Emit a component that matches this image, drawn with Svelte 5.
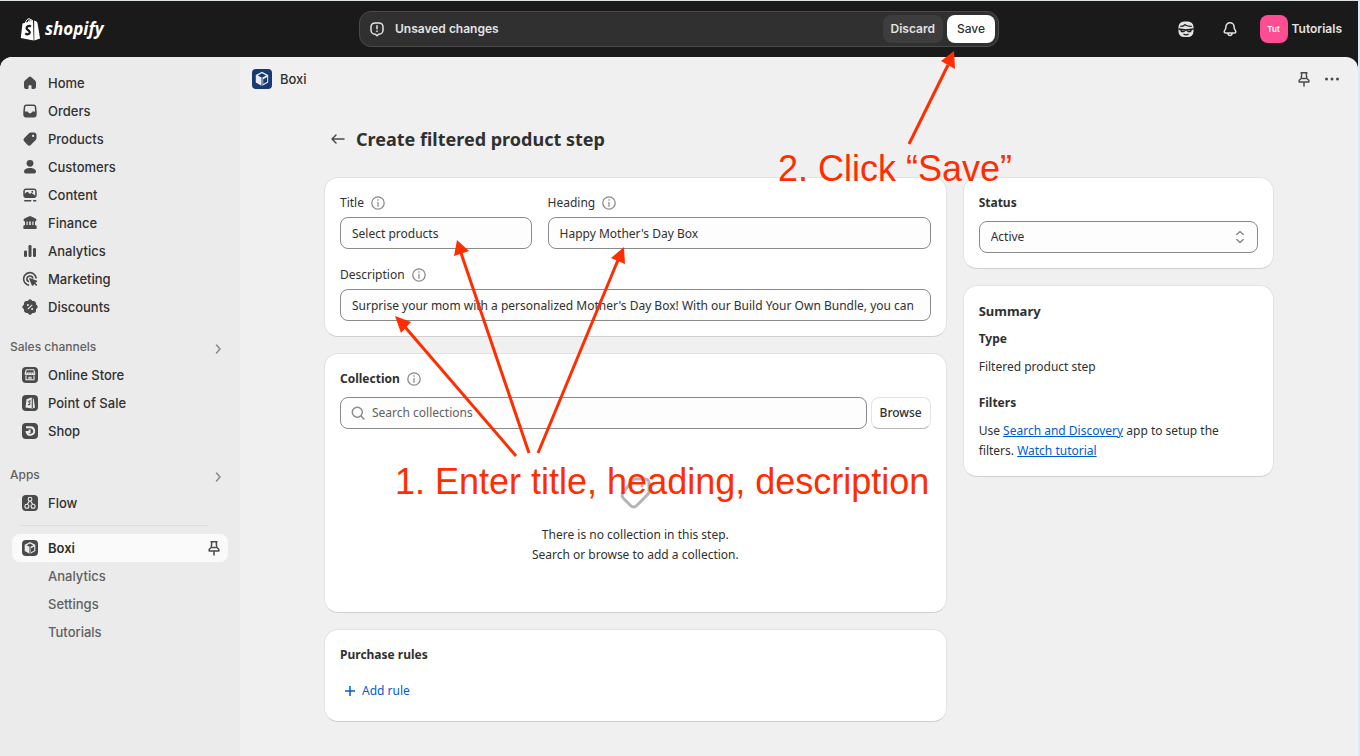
<script lang="ts">
	interface NavItem {
		label: string;
		icon: string;
	}

	const mainNav: NavItem[] = [
		{ label: 'Home', icon: 'home' },
		{ label: 'Orders', icon: 'orders' },
		{ label: 'Products', icon: 'products' },
		{ label: 'Customers', icon: 'customers' },
		{ label: 'Content', icon: 'content' },
		{ label: 'Finance', icon: 'finance' },
		{ label: 'Analytics', icon: 'analytics' },
		{ label: 'Marketing', icon: 'marketing' },
		{ label: 'Discounts', icon: 'discounts' }
	];

	const channels: NavItem[] = [
		{ label: 'Online Store', icon: 'store' },
		{ label: 'Point of Sale', icon: 'pos' },
		{ label: 'Shop', icon: 'shop' }
	];

	const appPages = ['Analytics', 'Settings', 'Tutorials'];

	const arrows = [
		{ from: [909, 144], to: [948, 65], head: '954,51 941,61 955,69' },
		{ from: [516, 456], to: [405, 327], head: '395,316 411,322 401,333' },
		{ from: [529, 453], to: [461, 253], head: '457,240 454,256 469,251' },
		{ from: [538, 453], to: [618, 260], head: '624,247 611,258 625,264' }
	];

	let title = $state('Select products');
	let heading = $state("Happy Mother's Day Box");
	let description = $state(
		"Surprise your mom with a personalized Mother's Day Box! With our Build Your Own Bundle, you can"
	);
	let search = $state('');
	let status = $state('active');
</script>

{#snippet icon(name: string)}
	<svg class="icon" viewBox="0 0 20 20" aria-hidden="true">
		{#if name === 'home'}
			<path
				d="M8.9 3.9a1.6 1.6 0 0 1 2.2 0l4 3.6c.6.6.9 1.300.9 2.100v4.400c0 1.100-.9 2-2 2h-1.800a.7.7 0 0 1-.7-.7v-2.300a.7.7 0 0 0-.7-.7h-1.600a.7.7 0 0 0-.7.7v2.300a.7.7 0 0 1-.7.7h-1.800a2 2 0 0 1-2-2v-4.400c0-.8.300-1.500.9-2.100z"
			/>
		{:else if name === 'orders'}
			<path
				fill-rule="evenodd"
				d="M6.300 3.500h7.400c1.300 0 2.300.9 2.500 2.200l.5 5v3c0 1.500-1.200 2.800-2.700 2.800H6c-1.500 0-2.700-1.300-2.700-2.800v-3l.5-5c.200-1.300 1.200-2.200 2.500-2.200zm0 1.500c-.5 0-.9.400-1 .9l-.4 4.600h2.300c.5 0 .9.300 1.100.7l.2.5c.1.300.4.500.8.500h1.400c.4 0 .7-.2.8-.5l.2-.5c.2-.4.6-.7 1.100-.7h2.300l-.4-4.600c-.1-.5-.5-.9-1-.9z"
			/>
		{:else if name === 'products'}
			<path
				fill-rule="evenodd"
				d="M10.900 3.600h3.300c1.300 0 2.300 1 2.300 2.300v3.300c0 .7-.3 1.300-.8 1.800l-4.700 4.700a2.500 2.500 0 0 1-3.600 0l-3.100-3.100a2.500 2.500 0 0 1 0-3.600l4.700-4.700c.5-.5 1.200-.7 1.900-.7zm2.200 4.400a1.100 1.100 0 1 0 0-2.200 1.100 1.100 0 0 0 0 2.200z"
			/>
		{:else if name === 'customers'}
			<circle cx="10" cy="6.300" r="3.400" />
			<path d="M4 14.600c0-2.200 2.700-3.600 6-3.600s6 1.400 6 3.600c0 1.200-.8 1.900-1.900 1.900H5.900c-1.100 0-1.900-.7-1.900-1.900z" />
		{:else if name === 'content'}
			<path
				fill-rule="evenodd"
				d="M6 3.500h8c1.500 0 2.700 1.200 2.700 2.700v4.100c0 1.500-1.200 2.700-2.700 2.700H6a2.700 2.700 0 0 1-2.700-2.700V6.200c0-1.500 1.200-2.700 2.700-2.700zM6 5c-.7 0-1.200.5-1.200 1.200v2.600l1.600-1.500c.5-.5 1.300-.5 1.800 0l1.700 1.700.7-.6c.5-.4 1.200-.4 1.700 0l2.900 2V6.200c0-.7-.5-1.200-1.200-1.200zm6.300 2.700a1 1 0 1 0 0-2 1 1 0 0 0 0 2z"
			/>
			<rect x="4" y="15" width="7.500" height="1.500" rx=".7" />
			<rect x="13" y="15" width="3.500" height="1.500" rx=".7" />
		{:else if name === 'finance'}
			<path
				fill-rule="evenodd"
				d="M9.200 3.300a2 2 0 0 1 1.600 0l4.700 2.200c1.500.7 1.200 3-.5 3v3.600c1 .1 1.700.8 1.700 1.800v1.300c0 .5-.4.800-.8.800H4.100a.8.800 0 0 1-.8-.8v-1.300c0-1 .7-1.700 1.700-1.800V8.500c-1.700 0-2-2.300-.5-3zM6.500 8.500v3.600h1.200V8.500zm2.700 0v3.600h1.600V8.500zm3.100 0v3.600h1.200V8.500z"
			/>
		{:else if name === 'analytics'}
			<rect x="8.500" y="4" width="3" height="12" rx="1.200" />
			<rect x="4" y="9.500" width="3" height="6.500" rx="1.200" />
			<rect x="13" y="7" width="3" height="9" rx="1.200" />
		{:else if name === 'marketing'}
			<path
				class="line"
				d="M16.200 9.500a6.300 6.300 0 1 0-7 6.700M12.900 9.500a3 3 0 1 0-4 3.300"
			/>
			<path d="M9.300 10.200c-.3-.7.3-1.300 1-1l6.200 2.300c.8.300.8 1.400 0 1.700l-1.300.6 1.700 1.700c.7.700-.4 1.800-1.100 1.100l-1.700-1.700-.6 1.300c-.3.800-1.400.8-1.700 0z" />
		{:else if name === 'discounts'}
			<path
				d="M8.500 3.100a2 2 0 0 1 3 0l.9.900 1.300-.1c1.300 0 2.300 1 2.300 2.300v1.200l1 .9a2 2 0 0 1 0 3l-1 .9.100 1.300c0 1.300-1 2.400-2.300 2.400h-1.300l-1 1a2 2 0 0 1-3 0l-.9-1H6.300c-1.300 0-2.300-1-2.300-2.300v-1.300l-1-.9a2 2 0 0 1 0-3l1-.9V6.200c0-1.300 1-2.300 2.300-2.300l1.300.1z"
			/>
			<path class="cut" d="M7.800 12.200l4.400-4.400" />
			<circle class="hole" cx="7.900" cy="7.900" r="1" />
			<circle class="hole" cx="12.100" cy="12" r="1" />
		{:else if name === 'store'}
			<rect x="2" y="2" width="16" height="16" rx="4" />
			<path
				class="cut"
				d="M5.300 8l1-3.300h7.400L14.700 8zM5 8.300c0 2 2.500 2 2.500 0 0 2 2.500 2 2.500 0 0 2 2.500 2 2.500 0 0 2 2.500 2 2.500 0M6 10.500v4.300h8v-4.300M9 14.800v-2.500h2v2.500"
			/>
		{:else if name === 'pos'}
			<rect x="2" y="2" width="16" height="16" rx="4" />
			<path class="hole" d="M6.500 6.300l5-1.800 2.200 1.300 1.300 8.700-2.600 1-6.900-1z" />
			<path
				class="dark-line"
				d="M10.700 8.200c-1.600-.8-2.700.5-1.400 1.400 1.300.9.800 2.700-1.300 1.800M12.300 5v10"
			/>
		{:else if name === 'shop'}
			<rect x="2" y="2" width="16" height="16" rx="4" />
			<path class="cut thick" d="M6 6.200h4.300a3.800 3.800 0 1 1-3.600 4.700h2.900V8.600" />
		{:else if name === 'flow'}
			<rect x="2" y="2" width="16" height="16" rx="4" />
			<path
				class="cut"
				d="M11.900 6.200a1.900 1.900 0 1 1-3.800 0 1.900 1.900 0 0 1 3.800 0zM8.900 13.200a2 2 0 1 1-4 0 2 2 0 0 1 4 0zM15.100 13.200a2 2 0 1 1-4 0 2 2 0 0 1 4 0zM9.300 8L7.500 11.300M10.700 8l1.800 3.300"
			/>
		{:else if name === 'boxi'}
			<rect x="2" y="2" width="16" height="16" rx="4" />
			<path class="hole" d="M10 4l5.300 2.800v6.300L10 16l-5.300-2.900V6.800z" />
			<path d="M10 5.400l3.400 1.800L10 9 6.600 7.200zM11 10.200l3.200-1.700v4L11 14.200z" />
			<path class="dark-line" d="M10 9v7" />
		{/if}
	</svg>
{/snippet}

{#snippet info()}
	<svg class="icon info" viewBox="0 0 20 20" aria-hidden="true">
		<circle cx="10" cy="10" r="6.200" />
		<path d="M10 9.500v3.800M10 6.700v.5" />
	</svg>
{/snippet}

{#snippet pin()}
	<svg class="icon outline" viewBox="0 0 20 20" aria-hidden="true">
		<path
			d="M7.200 3.700h5.600l-.5 1.800.5 4 2 1.700v1.700H5.200v-1.700l2-1.700.5-4zM10 13v4M8.500 9.500h3"
		/>
	</svg>
{/snippet}

{#snippet navLink(item: NavItem)}
	<li>
		<a class="nav-link" href="#{item.icon}">
			{@render icon(item.icon)}
			<span>{item.label}</span>
		</a>
	</li>
{/snippet}

{#snippet sectionTitle(label: string)}
	<a class="section-title" href="#section">
		<span>{label}</span>
		<svg class="icon chevron" viewBox="0 0 20 20" aria-hidden="true">
			<path d="M8.500 8l3.500 4-3.500 4" />
		</svg>
	</a>
{/snippet}

<div class="app">
	<header class="topbar">
		<a class="brand" href="#home" aria-label="Shopify">
			<svg class="brand-bag" viewBox="0 0 22 25" aria-hidden="true">
				<path
					class="bag"
					d="M2.600 6.200l11-3.300.7 21L.8 21.500zM14.800 3.200l2.200.6 1.300 1.600 2.700 16.400-6 2.100z"
				/>
				<path class="handle" d="M5.500 6.200C6 3.200 8 .9 9.700 1.200c1.500.3 1.700 2.200 1.700 3.400M8.500 5C9 3 10.500 1.700 12 2.200c.8.300 1 .9 1.200 1.600" />
				<path class="letter" d="M11.500 9.300c-2.300-1.300-5 .3-4.500 2.200.4 1.900 3.200 1.900 3.200 4 0 2.200-2.500 2.700-4.700 1" />
			</svg>
			<span class="brand-name">shopify</span>
		</a>

		<div class="save-bar">
			<svg class="icon outline" viewBox="0 0 20 20" aria-hidden="true">
				<path
					d="M8 3.900h4a4 4 0 0 1 4 4v3.300a4 4 0 0 1-4 4h-.4L10 16.700l-1.600-1.500H8a4 4 0 0 1-4-4V7.900a4 4 0 0 1 4-4zM10 6.800v3M10 12v.5"
				/>
			</svg>
			<span class="save-text">Unsaved changes</span>
			<button class="discard" type="button">Discard</button>
			<button class="save" type="button">Save</button>
		</div>

		<div class="account">
			<button class="plain" type="button" aria-label="Sidekick">
				<svg class="icon" viewBox="0 0 20 20" aria-hidden="true">
					<rect x="2.500" y="2.500" width="15" height="15.500" rx="5.500" />
					<path class="face" d="M4.300 7.400c1.900 0 3.500-.6 4.700-1.700 1.700 1.200 4 1.800 6.700 1.700M4.500 10.200l1 2.500h2L10 11l2.500 1.700h2l1-2.500M2.500 10l7.500 1 7.500-1M7.500 15.200c1.700.8 3.300.8 5 0" />
				</svg>
			</button>
			<button class="plain" type="button" aria-label="Notifications">
				<svg class="icon outline" viewBox="0 0 20 20" aria-hidden="true">
					<path
						d="M10 3.700c-2.400 0-4.100 1.900-4.100 4.200 0 1.900-.4 2.700-1.300 3.700-.9 1.200-.3 2.400 1.100 2.400h8.600c1.400 0 2-1.200 1.100-2.400-.9-1-1.300-1.800-1.300-3.700 0-2.300-1.700-4.200-4.100-4.200zM8 14.500c.2 2.600 3.800 2.600 4 0"
					/>
				</svg>
			</button>
			<button class="user" type="button">
				<span class="avatar">Tut</span>
				<span>Tutorials</span>
			</button>
		</div>
	</header>

	<div class="frame">
		<nav class="sidebar" aria-label="Main">
			<ul>
				{#each mainNav as item (item.label)}
					{@render navLink(item)}
				{/each}
			</ul>

			{@render sectionTitle('Sales channels')}
			<ul>
				{#each channels as item (item.label)}
					{@render navLink(item)}
				{/each}
			</ul>

			{@render sectionTitle('Apps')}
			<ul>
				{@render navLink({ label: 'Flow', icon: 'flow' })}
			</ul>

			<hr />

			<ul>
				<li>
					<a class="nav-link active" href="#boxi">
						{@render icon('boxi')}
						<span>Boxi</span>
						{@render pin()}
					</a>
				</li>
				{#each appPages as page (page)}
					<li><a class="nav-link sub" href="#boxi-{page}">{page}</a></li>
				{/each}
			</ul>
		</nav>

		<main>
			<div class="app-bar">
				<svg class="app-logo" viewBox="0 0 20 20" aria-hidden="true">
					<rect width="20" height="20" rx="4" />
					<path class="hole" d="M10 2.800l6.200 3.300v7.300L10 17l-6.200-3.600V6.100z" />
					<path d="M10 4.300l4.200 2.200L10 8.700 5.800 6.500zM11.200 10.200l4-2.100v4.700l-4 2.300z" />
					<path class="seam" d="M10 8.700V17" />
				</svg>
				<span class="app-name">Boxi</span>
				<button class="plain" type="button" aria-label="Pin app">{@render pin()}</button>
				<button class="plain" type="button" aria-label="More actions">
					<svg class="icon" viewBox="0 0 20 20" aria-hidden="true">
						<circle cx="4.500" cy="10" r="1.500" />
						<circle cx="10" cy="10" r="1.500" />
						<circle cx="15.500" cy="10" r="1.500" />
					</svg>
				</button>
			</div>

			<div class="page">
				<div class="page-title">
					<button class="plain" type="button" aria-label="Back">
						<svg class="icon outline" viewBox="0 0 20 20" aria-hidden="true">
							<path d="M16 10H4M8 6l-4 4 4 4" />
						</svg>
					</button>
					<h1>Create filtered product step</h1>
				</div>

				<div class="columns">
					<div class="stack">
						<section class="card fields">
							<div class="field">
								<div class="label-row">
									<label for="title">Title</label>
									{@render info()}
								</div>
								<input id="title" type="text" bind:value={title} />
							</div>
							<div class="field">
								<div class="label-row">
									<label for="heading">Heading</label>
									{@render info()}
								</div>
								<input id="heading" type="text" bind:value={heading} />
							</div>
							<div class="field wide">
								<div class="label-row">
									<label for="description">Description</label>
									{@render info()}
								</div>
								<input id="description" type="text" bind:value={description} />
							</div>
						</section>

						<section class="card">
							<div class="label-row">
								<h2>Collection</h2>
								{@render info()}
							</div>
							<div class="search-row">
								<label class="search">
									<svg class="icon outline" viewBox="0 0 20 20" aria-hidden="true">
										<circle cx="9.300" cy="9.300" r="5" />
										<path d="M13 13l3 3" />
									</svg>
									<input
										type="text"
										placeholder="Search collections"
										aria-label="Search collections"
										bind:value={search}
									/>
								</label>
								<button class="browse" type="button">Browse</button>
							</div>
							<div class="empty">
								<svg class="empty-icon" viewBox="0 0 40 40" aria-hidden="true">
									<path
										d="M20.500 6h9.500a4 4 0 0 1 4 4v8.500a4 4 0 0 1-1.200 2.900L21.500 32.700a4 4 0 0 1-5.700 0l-7.500-7.500a4 4 0 0 1 0-5.700L17.600 7.200A4 4 0 0 1 20.500 6z"
									/>
									<circle cx="27" cy="13" r="1.500" />
								</svg>
								<p>There is no collection in this step.</p>
								<p>Search or browse to add a collection.</p>
							</div>
						</section>

						<section class="card rules">
							<h2>Purchase rules</h2>
							<button class="add-rule" type="button">
								<svg viewBox="0 0 12 12" aria-hidden="true">
									<path d="M6 1v10M1 6h10" />
								</svg>
								<span>Add rule</span>
							</button>
						</section>
					</div>

					<div class="stack">
						<section class="card status">
							<h2><label for="status">Status</label></h2>
							<div class="select">
								<select id="status" bind:value={status}>
									<option value="active">Active</option>
									<option value="draft">Draft</option>
								</select>
								<svg class="icon outline" viewBox="0 0 20 20" aria-hidden="true">
									<path d="M6.800 7.500L10 4.500l3.200 3M6.800 12.500l3.200 3 3.200-3" />
								</svg>
							</div>
						</section>

						<section class="card summary">
							<h2 class="large">Summary</h2>
							<h3>Type</h3>
							<p>Filtered product step</p>
							<h3 class="spaced">Filters</h3>
							<p>
								Use <a href="#discovery">Search and Discovery</a> app to setup the filters.
								<a href="#tutorial">Watch tutorial</a>
							</p>
						</section>
					</div>
				</div>
			</div>
		</main>
	</div>

	<!-- tutorial notes drawn on top of the page -->
	<svg class="notes" viewBox="0 0 1360 756">
		{#each arrows as arrow (arrow.head)}
			<line x1={arrow.from[0]} y1={arrow.from[1]} x2={arrow.to[0]} y2={arrow.to[1]} />
			<polygon points={arrow.head} />
		{/each}
		<text x="395" y="494">1. Enter title, heading, description</text>
		<text x="778" y="181">2. Click “Save”</text>
	</svg>
</div>

<style>
	:global(body) {
		background: #1a1a1a;
	}

	.app {
		--ui: Inter, 'Liberation Sans', sans-serif;
		--page: 'Noto Sans', 'Open Sans', sans-serif;
		position: relative;
		display: flex;
		flex-direction: column;
		box-sizing: border-box;
		min-height: 100vh;
		border-top: 1px solid #dde3e0;
		border-right: 2px solid #dfeaf5;
		background: #1a1a1a;
		color: #303030;
		font: 500 13px/20px var(--ui);
		overflow: hidden;
	}

	.app :global(*) {
		box-sizing: border-box;
	}

	h1,
	h2,
	h3,
	p,
	ul {
		margin: 0;
		padding: 0;
	}

	ul {
		list-style: none;
	}

	button {
		border: 0;
		padding: 0;
		background: none;
		color: inherit;
		font: inherit;
		cursor: pointer;
	}

	.icon {
		display: block;
		flex: none;
		width: 20px;
		height: 20px;
		fill: #4a4a4a;
	}

	.icon .line,
	.icon .cut,
	.icon .dark-line {
		fill: none;
		stroke: #4a4a4a;
		stroke-width: 1.6;
	}

	.icon .cut {
		stroke: #ebebeb;
		stroke-width: 1.1;
	}

	.icon .thick {
		stroke-width: 2;
	}

	.icon .dark-line {
		stroke-width: 1.1;
	}

	.icon .hole,
	.app-logo .hole {
		fill: #ebebeb;
	}

	.outline,
	.info,
	.chevron {
		fill: none;
		stroke: #4a4a4a;
		stroke-width: 1.5;
		stroke-linecap: round;
		stroke-linejoin: round;
	}

	.plain {
		display: flex;
	}

	/* Top bar */
	.topbar {
		display: grid;
		grid-template-columns: 1fr minmax(0, 640px) 1fr;
		align-items: center;
		height: 56px;
		padding: 0 16px;
		color: #e3e3e3;
		font-size: 12px;
		font-weight: 600;
	}

	.brand {
		display: flex;
		align-items: center;
		gap: 4px;
		padding-left: 4px;
		color: #fff;
		text-decoration: none;
	}

	.brand-bag {
		width: 21px;
		height: 25px;
	}

	.bag {
		fill: #fff;
	}

	.handle {
		fill: none;
		stroke: #fff;
		stroke-width: 1;
	}

	.letter {
		fill: none;
		stroke: #1a1a1a;
		stroke-width: 2.4;
	}

	.brand-name {
		font: italic 700 17px/24px 'Open Sans', 'Noto Sans', sans-serif;
	}

	.save-bar {
		display: flex;
		align-items: center;
		height: 36px;
		padding: 0 3px 0 7px;
		border: 1px solid #4a4a4a;
		border-radius: 12px;
		background: #303030;
	}

	.save-bar .outline,
	.account .outline {
		stroke: #e3e3e3;
	}

	.save-text {
		flex: 1;
		margin-left: 8px;
	}

	.discard,
	.save {
		height: 28px;
		padding: 0 8px;
		border-radius: 8px;
		background: #3d3d3d;
	}

	.save {
		margin-left: 4px;
		padding: 0 10px;
		background: #fff;
		color: #303030;
		font-weight: 500;
	}

	.account {
		display: flex;
		align-items: center;
		justify-content: flex-end;
		gap: 24px;
	}

	.account .icon {
		fill: #e3e3e3;
	}

	.account .outline {
		fill: none;
	}

	.account .face {
		fill: none;
		stroke: #1a1a1a;
		stroke-width: 1.3;
	}

	.user {
		display: flex;
		align-items: center;
		gap: 4px;
		margin-left: -4px;
	}

	.avatar {
		width: 28px;
		height: 28px;
		border-radius: 8px;
		background: #ff4d94;
		color: #fff;
		font-size: 8px;
		line-height: 28px;
		text-align: center;
	}

	/* Frame */
	.frame {
		display: grid;
		grid-template-columns: 240px minmax(0, 1fr);
		flex: 1;
		border-radius: 12px 12px 0 0;
		background: #f0f0f0;
		overflow: hidden;
	}

	.sidebar {
		padding: 12px 12px 0;
		background: #ebebeb;
	}

	.nav-link {
		display: flex;
		align-items: center;
		gap: 8px;
		height: 28px;
		padding: 0 4px 0 8px;
		border-radius: 8px;
		color: #303030;
		text-decoration: none;
	}

	.nav-link span {
		flex: 1;
	}

	.nav-link.active {
		background: #fafafa;
		font-weight: 600;
	}

	.nav-link.sub {
		padding-left: 36px;
		color: #616161;
		font-weight: 450;
	}

	.section-title {
		display: flex;
		align-items: center;
		justify-content: space-between;
		height: 28px;
		margin: 12px 0 0 -2px;
		color: #616161;
		font-size: 12px;
		text-decoration: none;
	}

	ul + .section-title ~ .section-title {
		margin-top: 16px;
	}

	.chevron {
		stroke: #8a8a8a;
	}

	hr {
		height: 1px;
		margin: 8px 20px 8px 8px;
		border: 0;
		background: #dcdcdc;
	}

	.app-bar {
		display: flex;
		align-items: center;
		gap: 8px;
		height: 44px;
		padding: 0 16px 0 12px;
		font-weight: 450;
	}

	.app-name {
		flex: 1;
	}

	.app-logo {
		width: 20px;
		height: 20px;
		fill: #173a74;
	}

	.seam {
		fill: none;
		stroke: #173a74;
		stroke-width: 1;
	}

	/* Page */
	.page {
		max-width: 998px;
		margin: 0 auto;
		padding: 24px 24px 34px;
		font: 400 12px/20px var(--page);
	}

	.page-title {
		display: flex;
		align-items: center;
		gap: 8px;
		height: 28px;
		margin-bottom: 24px;
		padding-left: 4px;
	}

	h1 {
		font-size: 18px;
		font-weight: 700;
		line-height: 24px;
	}

	h2,
	h3 {
		font-size: 12px;
		font-weight: 700;
		line-height: 20px;
	}

	.large {
		font-size: 13px;
	}

	.columns {
		display: grid;
		grid-template-columns: minmax(0, 2fr) minmax(0, 1fr);
		align-items: start;
		gap: 16px;
	}

	.stack {
		display: grid;
		gap: 16px;
	}

	.card {
		padding: 15px;
		border: 1px solid #e3e3e3;
		border-bottom-color: #cfcfcf;
		border-radius: 14px;
		background: #fff;
	}

	.fields {
		display: grid;
		grid-template-columns: 1fr 2fr;
		gap: 16px;
	}

	.field {
		display: grid;
		gap: 4px;
		min-width: 0;
	}

	.wide {
		grid-column: 1 / -1;
	}

	.label-row {
		display: flex;
		align-items: center;
		gap: 4px;
	}

	.info {
		stroke: #8a8a8a;
		stroke-width: 1.3;
	}

	.field input,
	.search,
	select {
		width: 100%;
		height: 32px;
		padding: 0 11px;
		border: 1px solid #8a8a8a;
		border-radius: 8px;
		background: #fdfdfd;
		color: #303030;
		font: inherit;
	}

	.search-row {
		display: flex;
		gap: 4px;
		margin-top: 8px;
	}

	.search {
		display: flex;
		align-items: center;
		flex: 1;
		gap: 4px;
		padding: 0 7px;
	}

	.search .outline,
	.select .outline {
		stroke: #8a8a8a;
	}

	.search input {
		flex: 1;
		min-width: 0;
		padding: 0;
		border: 0;
		background: none;
		font: inherit;
		outline: 0;
	}

	.search input::placeholder {
		color: #616161;
	}

	.browse {
		width: 60px;
		height: 32px;
		border: 1px solid #e3e3e3;
		border-bottom-color: #b5b5b5;
		border-radius: 8px;
		background: #fff;
		font-weight: 500;
	}

	.empty {
		display: flex;
		flex-direction: column;
		align-items: center;
		padding: 44px 0 32px;
	}

	.empty-icon {
		width: 40px;
		height: 40px;
		margin-bottom: 12px;
		fill: none;
		stroke: #b5b5b5;
		stroke-width: 3;
	}

	.empty-icon circle {
		fill: #b5b5b5;
		stroke: none;
	}

	.rules {
		padding-bottom: 20px;
	}

	.add-rule {
		display: flex;
		align-items: center;
		gap: 6px;
		margin: 16px 0 0 4px;
		color: #005bd3;
	}

	.add-rule svg {
		width: 12px;
		height: 12px;
		stroke: #005bd3;
		stroke-width: 1.5;
	}

	.status,
	.summary {
		display: grid;
		gap: 8px;
	}

	.select {
		display: grid;
		align-items: center;
	}

	.select > :global(*) {
		grid-area: 1 / 1;
	}

	.select .outline {
		justify-self: end;
		margin-right: 8px;
		pointer-events: none;
	}

	select {
		appearance: none;
	}

	.spaced {
		margin-top: 8px;
	}

	.summary p {
		padding-right: 16px;
	}

	.summary a {
		color: #005bd3;
	}

	.notes {
		position: absolute;
		top: -1px;
		left: 0;
		width: 1360px;
		height: 756px;
		fill: #ff2d00;
		font: 36px 'Liberation Sans', Arial, sans-serif;
		pointer-events: none;
	}

	.notes line {
		stroke: #ff2d00;
		stroke-width: 3;
	}
</style>
